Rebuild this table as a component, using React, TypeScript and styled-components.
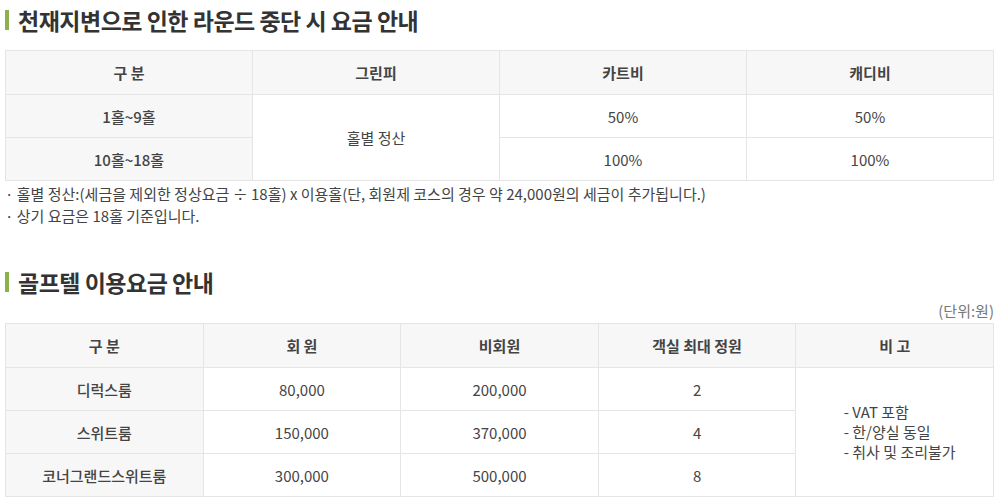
import React from 'react';
import styled, { createGlobalStyle } from 'styled-components';

const GlobalStyle = createGlobalStyle`
  body {
    margin: 0;
    background: #fff;
    font-family: "Noto Sans CJK KR", "Noto Sans", sans-serif;
    color: #444;
  }
`;

const roundRows = [
  { label: '1홀~9홀', cart: '50%', caddie: '50%' },
  { label: '10홀~18홀', cart: '100%', caddie: '100%' },
];

const rooms = [
  { name: '디럭스룸', member: '80,000', guest: '200,000', max: '2' },
  { name: '스위트룸', member: '150,000', guest: '370,000', max: '4' },
  { name: '코너그랜드스위트룸', member: '300,000', guest: '500,000', max: '8' },
];

const App: React.FC = () => {
  return (
    <Page>
      <GlobalStyle />
      <Section>
        <Title>천재지변으로 인한 라운드 중단 시 요금 안내</Title>
        <Table>
          <colgroup>
            <col style={{ width: '25%' }} />
            <col style={{ width: '25%' }} />
            <col style={{ width: '25%' }} />
            <col style={{ width: '25%' }} />
          </colgroup>
          <thead>
            <tr>
              <Th>구 분</Th>
              <Th>그린피</Th>
              <Th>카트비</Th>
              <Th>캐디비</Th>
            </tr>
          </thead>
          <tbody>
            {roundRows.map((row, i) => (
              <tr key={row.label}>
                <RowHead>{row.label}</RowHead>
                {i === 0 && <Td rowSpan={2}>홀별 정산</Td>}
                <Td>{row.cart}</Td>
                <Td>{row.caddie}</Td>
              </tr>
            ))}
          </tbody>
        </Table>
        <Notes>
          <Note>홀별 정산:(세금을 제외한 정상요금 ÷ 18홀) x 이용홀(단, 회원제 코스의 경우 약 24,000원의 세금이 추가됩니다.)</Note>
          <Note>상기 요금은 18홀 기준입니다.</Note>
        </Notes>
      </Section>

      <Section $gap>
        <Title>골프텔 이용요금 안내</Title>
        <Unit>(단위:원)</Unit>
        <Table>
          <colgroup>
            <col style={{ width: '20%' }} />
            <col style={{ width: '20%' }} />
            <col style={{ width: '20%' }} />
            <col style={{ width: '20%' }} />
            <col style={{ width: '20%' }} />
          </colgroup>
          <thead>
            <tr>
              <Th>구 분</Th>
              <Th>회 원</Th>
              <Th>비회원</Th>
              <Th>객실 최대 정원</Th>
              <Th>비 고</Th>
            </tr>
          </thead>
          <tbody>
            {rooms.map((room, i) => (
              <tr key={room.name}>
                <RowHead>{room.name}</RowHead>
                <Td>{room.member}</Td>
                <Td>{room.guest}</Td>
                <Td>{room.max}</Td>
                {i === 0 && (
                  <Td rowSpan={3}>
                    <RemarkList>
                      <li>- VAT 포함</li>
                      <li>- 한/양실 동일</li>
                      <li>- 취사 및 조리불가</li>
                    </RemarkList>
                  </Td>
                )}
              </tr>
            ))}
          </tbody>
        </Table>
      </Section>
    </Page>
  );
};

const Page = styled.div`
  padding: 6px 5px 0 5px;
  width: 989px;
`;

const Section = styled.section<{ $gap?: boolean }>`
  margin-top: ${(p) => (p.$gap ? '41px' : '0')};
`;

const Title = styled.h2`
  position: relative;
  margin: 0 0 16px 0;
  padding-left: 13px;
  font-size: 23px;
  line-height: 28px;
  font-weight: 700;
  color: #333;
  letter-spacing: -0.5px;

  &::before {
    content: '';
    position: absolute;
    left: 0;
    top: 4px;
    width: 4px;
    height: 20px;
    background: #8cb04a;
  }
`;

const Unit = styled.div`
  margin: -11px 0 2px 0;
  text-align: right;
  font-size: 15px;
  line-height: 20px;
  color: #777;
`;

const Table = styled.table`
  width: 100%;
  border-collapse: collapse;
  table-layout: fixed;
  font-size: 15px;
  color: #444;
`;

const Th = styled.th`
  height: 43px;
  padding: 0;
  background: #f7f7f7;
  border: 1px solid #e5e5e5;
  font-weight: 700;
  color: #444;
  text-align: center;
`;

const RowHead = styled.td`
  height: 42px;
  padding: 0;
  background: #f7f7f7;
  border: 1px solid #e5e5e5;
  font-weight: 500;
  color: #444;
  text-align: center;
`;

const Td = styled.td`
  height: 42px;
  padding: 0;
  border: 1px solid #e5e5e5;
  text-align: center;
  color: #444;
`;

const RemarkList = styled.ul`
  display: inline-block;
  margin: 0;
  padding: 0 0 0 10px;
  list-style: none;
  text-align: left;
  line-height: 20px;
`;

const Notes = styled.ul`
  margin: 2px 0 0 0;
  padding: 0;
  list-style: none;
`;

const Note = styled.li`
  font-size: 15px;
  line-height: 22px;
  color: #444;

  &::before {
    content: '· ';
  }
`;

export default App;
